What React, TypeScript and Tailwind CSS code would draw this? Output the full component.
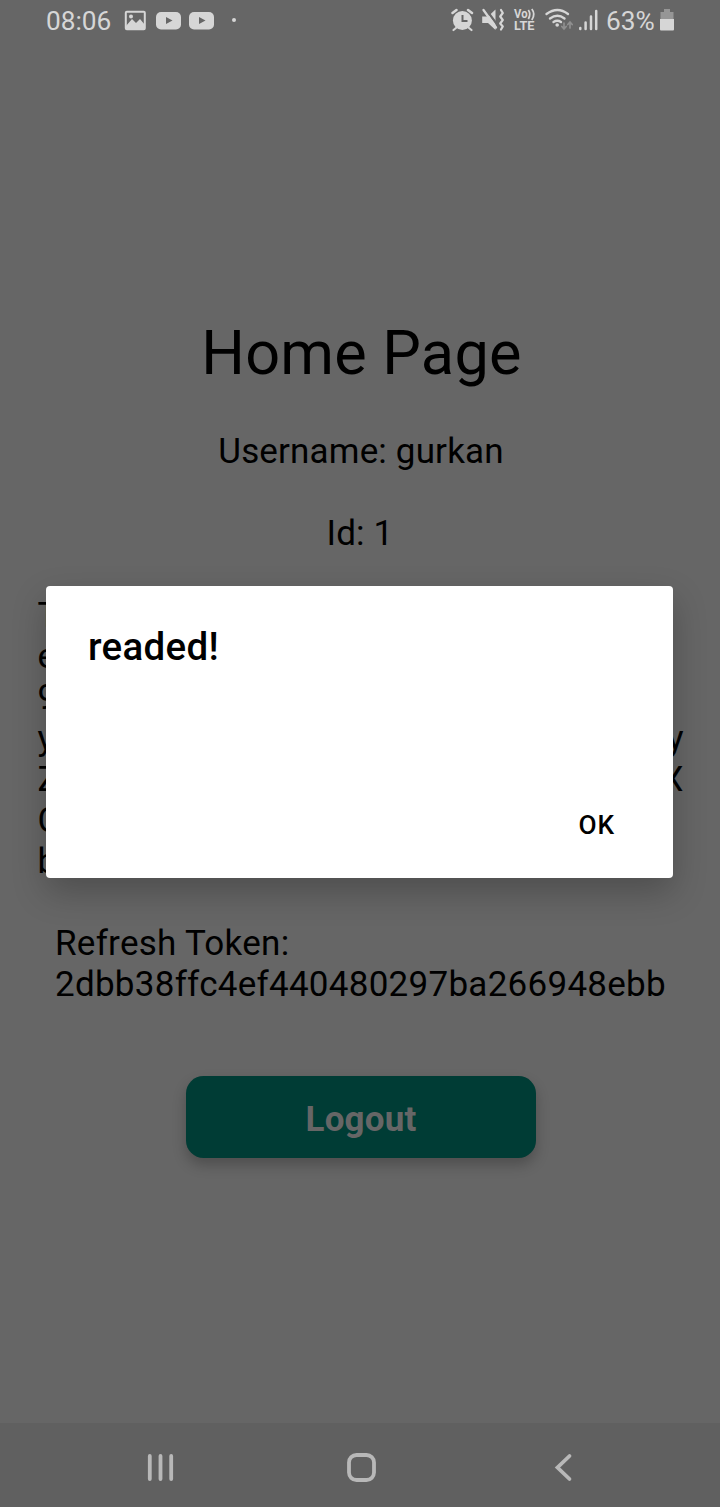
import React from "react";

const shade = "#d6d6d6";

function StatusBar() {
  return (
    <header className="flex h-11 shrink-0 items-start pt-[5px] pl-[46px] pr-[46px] text-[26.25px] leading-8 text-[#d6d6d6]">
      <span className="w-[66px] whitespace-nowrap">08:06</span>
      <svg className="ml-3 mt-[5px] h-[22px] w-[92px]" viewBox="0 0 92 22">
        <rect x="1.8" y="1.8" width="19" height="17.5" rx="1" fill="none" stroke={shade} strokeWidth="2" />
        <path d="M2 16l6-7 4 4 4-4 5 6v5H2z" fill={shade} />
        <circle cx="7" cy="6.500" r="2" fill={shade} />
        <rect x="32" y="2" width="25" height="17.500" rx="5" fill={shade} />
        <path d="M42 7v7l6.500-3.500z" fill="#666666" />
        <rect x="65" y="2" width="25" height="17.500" rx="5" fill={shade} />
        <path d="M75 7v7l6.500-3.500z" fill="#666666" />
      </svg>
      <span className="ml-[16px] mt-[13px] h-1 w-1 rounded-full bg-[#d6d6d6]" />
      <svg className="ml-auto mt-[1px] h-[28px] w-[152px] shrink-0" viewBox="450 6 152 28">
        <g fill="none" stroke={shade} strokeLinecap="round">
          <path d="M452.500 13l4-3M472 13l-4-3" strokeWidth="2.600" />
          <path d="M456 28l-2.500 2M469 28l2.500 2" strokeWidth="2.200" />
          <circle cx="462.400" cy="20.500" r="9.500" fill={shade} stroke="none" />
          <path d="M462.500 15v6h5" stroke="#666666" strokeWidth="2" strokeLinecap="butt" />
          <path d="M482.200 16.500h5.800l7.500-7v20.500l-7.500-7h-5.800z" fill={shade} stroke="none" />
          <path d="M484.500 7.500L499 27" stroke="#666666" strokeWidth="2.200" />
          <path d="M483.500 10L496 27.500" strokeWidth="2.300" />
          <path d="M501 10l1.800 3-2.600 3.500 2.600 3.500-2.600 3.500 2.600 3-1.800 3" strokeWidth="2.200" strokeLinejoin="round" />
          <path d="M546.500 14q11-8 21.500 0M550 18.500q7.500-5.500 14.500 0M553.500 22q3.800-2.500 7.500 0" strokeWidth="2.300" />
          <circle cx="557.200" cy="25" r="1.800" fill={shade} stroke="none" />
          <path d="M564 23v6M561.800 26.500l2.200 2.500 2.200-2.500M570 28v-6M567.800 24.500l2.200-2.500 2.200 2.500" stroke="#8f8f8f" strokeWidth="1.700" />
          <path d="M580.300 28v1M585.600 22.500v6.500M591 16.500V29M596.200 11v18" strokeWidth="2.500" />
        </g>
        <g fill={shade} fontFamily="Roboto, sans-serif" fontWeight="700">
          <text x="514" y="18.300" fontSize="12" textLength="13.500" lengthAdjust="spacingAndGlyphs">Vo</text>
          <text x="514" y="30.300" fontSize="12.500" textLength="20.500" lengthAdjust="spacingAndGlyphs">LTE</text>
        </g>
        <path d="M528.300 10q3 4 0 9M531.800 9q4 5 0 11" fill="none" stroke={shade} strokeWidth="1.800" />
      </svg>
      <span className="ml-1 w-[49px] whitespace-nowrap">63%</span>
      <svg className="ml-[5px] mt-[3px] h-[24px] w-[14px] shrink-0" viewBox="0 0 14 24">
        <path d="M4 1h6v3h3.500v8H.500V4H4z" fill="#969696" />
        <path d="M0 11h14v10.500q0 1-1 1H1q-1 0-1-1z" fill={shade} />
      </svg>
    </header>
  );
}

const tokenLines: [string, string][] = [
  ["T", ""],
  ["e", ""],
  ["9", ""],
  ["y", "y"],
  ["Z", "X"],
  ["C", ""],
  ["b", ""],
];

function Home() {
  return (
    <main className="flex flex-1 flex-col items-center text-[35px] leading-[41px] text-black">
      <h1 className="ml-[3px] mt-[273px] text-[61.25px] leading-[72px] tracking-[0.2px]">Home Page</h1>
      <p className="ml-[2px] mt-[42px] tracking-[0.16px]">Username: gurkan</p>
      <p className="mt-[41px] tracking-[0.16px]">Id: 1</p>
      <div className="ml-px mt-[41px] w-[646px]">
        {tokenLines.map(([start, end], i) => (
          <p key={i} className="flex justify-between">
            <span>{start}</span>
            <span>{end}</span>
          </p>
        ))}
      </div>
      <p className="mt-[41px] w-[610px] whitespace-nowrap tracking-[0.27px]">
        Refresh Token:
        <br />
        2dbb38ffc4ef440480297ba266948ebb
      </p>
      <button className="ml-[2px] mt-[71px] flex h-[82px] w-[350px] items-center justify-center rounded-[17.500px] bg-[#003c35] pt-1 font-bold tracking-[0.15px] text-[#666666] shadow-[0_7px_14px_rgba(0,0,0,0.24)]">
        Logout
      </button>
    </main>
  );
}

function NavBar() {
  return (
    <nav className="flex h-[84px] shrink-0 items-center justify-center bg-[#606060] pt-1">
      <svg className="h-[40px] w-[440px]" viewBox="140 1447 440 40" fill="none" stroke="#b8b8b8" strokeWidth="3.800" strokeLinecap="round">
        <path d="M149.800 1456v23M160.500 1456v23M171.200 1456v23" />
        <rect x="349" y="1455" width="25" height="25" rx="7.500" />
        <path d="M569.500 1456l-12 11.500 12 11.500" />
      </svg>
    </nav>
  );
}

function AlertDialog() {
  return (
    <div role="dialog" className="absolute left-[46px] top-[586px] flex h-[292px] w-[627px] flex-col justify-between rounded-[4px] bg-white pb-[37px] pl-[42px] pr-[58px] pt-[38px] text-black shadow-[0_14px_34px_rgba(0,0,0,0.24)]">
      <h2 className="text-[38.500px] font-medium leading-[45px] tracking-[0.3px]">readed!</h2>
      <button className="self-end text-[26.250px] font-medium leading-[32px] tracking-[0.9px]">OK</button>
    </div>
  );
}

export default function App() {
  return (
    <div className="relative flex h-[1507px] w-[720px] flex-col overflow-hidden bg-[#666666] font-['Roboto',sans-serif]">
      <StatusBar />
      <Home />
      <NavBar />
      <AlertDialog />
    </div>
  );
}
